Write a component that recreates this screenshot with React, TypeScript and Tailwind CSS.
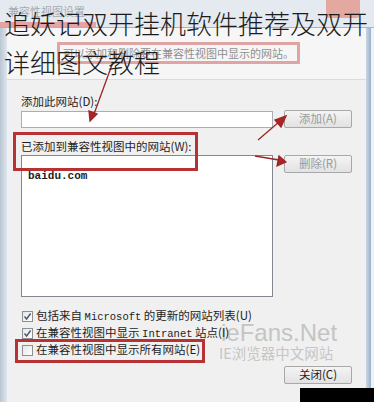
import React from "react";

const cjk = '"Noto Sans CJK SC", "Noto Sans", sans-serif';
const mono = '"Liberation Mono", "Noto Sans CJK SC", monospace';

function Btn({ label, muted = false }: { label: string; muted?: boolean }) {
  return (
    <div
      className={`flex h-[18px] w-[68px] items-center justify-center rounded-[2px] border border-[#a8a8a8] bg-gradient-to-b from-[#f4f4f4] to-[#e2e2e2] text-[11.5px] leading-none ${
        muted ? "text-[#9a9a9a]" : "text-[#1e1e1e]"
      }`}
    >
      {label}
    </div>
  );
}

function Check({ checked, children }: { checked: boolean; children: React.ReactNode }) {
  return (
    <div className="flex h-[16px] items-center gap-[3px] text-[11.5px] text-[#1e1e1e]">
      <div className="flex h-[11px] w-[11px] items-center justify-center border border-[#8e8f8f] bg-gradient-to-br from-[#e6e6e6] to-white">
        {checked && (
          <svg width="9" height="9" viewBox="0 0 9 9">
            <path d="M1.5 4.5 L3.6 7 L7.6 1.5" fill="none" stroke="#4a5a6a" strokeWidth="1.4" />
          </svg>
        )}
      </div>
      <span className="whitespace-nowrap">{children}</span>
    </div>
  );
}

export default function App() {
  return (
    <div className="relative h-[402px] w-[374px] overflow-hidden bg-[#f0f0f0]" style={{ fontFamily: cjk }}>
      {/* title bar */}
      <div className="flex h-[28px] items-start justify-between border-b border-[#a9b3be] bg-[#e4eaf0]">
        <span className="ml-[8px] mt-[3px] text-[11px] text-[#a4aab2]">兼容性视图设置</span>
        <div className="mr-[14px] h-[18px] w-[34px] rounded-b-[4px] bg-[#e3a8a0]" />
      </div>

      <div className="flex h-[374px]">
        <div className="w-[7px] bg-gradient-to-r from-[#b9c6d3] to-[#dfe6ee]" />
        <div className="flex flex-1 flex-col bg-[#f0f0f0]">
          {/* header */}
          <div className="h-[52px] border-b border-[#dcdcdc] bg-[#f6f6f6] pl-[50px] pt-[14px]">
            <div className="flex h-[22px] w-[243px] items-center border-[3px] border-[#dfa5a5] pl-[3px] text-[11px] text-[#8f8f8f]">
              可以添加和删除要在兼容性视图中显示的网站。
            </div>
          </div>

          <div className="pl-[14px] pr-[14px]">
            <div className="mt-[13px] h-[16px] text-[11.5px] leading-[16px] text-[#1e1e1e]">添加此网站(D):</div>
            <div className="mt-[1px] flex items-center justify-between">
              <div className="h-[17px] w-[252px] border border-[#abadb3] bg-white" />
              <Btn label="添加(A)" muted />
            </div>

            <div className="mt-[10px] h-[16px] text-[11.5px] leading-[16px] text-[#1e1e1e]">已添加到兼容性视图中的网站(W):</div>
            <div className="mt-[1px] flex items-start justify-between">
              <div className="h-[142px] w-[252px] border border-[#828790] bg-white pl-[6px] pt-[4px]">
                <span className="text-[11px] font-bold text-[#1e1e1e]" style={{ fontFamily: mono }}>
                  baidu.com
                </span>
              </div>
              <Btn label="删除(R)" muted />
            </div>

            <div className="relative mt-[11px] flex flex-col gap-[1px] pl-[1px]">
              <div
                className="pointer-events-none absolute left-[200px] top-[13px] text-[24px] leading-none text-[#c4c4c4]"
                style={{ fontFamily: '"Liberation Sans", sans-serif' }}
              >
                ieFans.Net
              </div>
              <div className="pointer-events-none absolute left-[198px] top-[38px] text-[14.5px] leading-none text-[#c6c6c6]">
                IE浏览器中文网站
              </div>
              <div className="relative">
                <Check checked>
                  包括来自 <span className="text-[10.5px]" style={{ fontFamily: mono }}>Microsoft</span> 的更新的网站列表(U)
                </Check>
              </div>
              <div className="relative">
                <Check checked>
                  在兼容性视图中显示 <span className="text-[10.5px]" style={{ fontFamily: mono }}>Intranet</span> 站点(I)
                </Check>
              </div>
              <div className="relative">
                <Check checked={false}>在兼容性视图中显示所有网站(E)</Check>
              </div>
            </div>

            <div className="mt-[8px] flex justify-end">
              <Btn label="关闭(C)" />
            </div>
          </div>
        </div>
        <div className="flex w-[8px]">
          <div className="w-[5px] bg-gradient-to-r from-[#c9d6e3] to-[#98b1cc]" />
          <div className="w-[3px] bg-[#eef2f6]" />
        </div>
      </div>

      {/* annotations */}
      <div className="pointer-events-none absolute left-[13px] top-[132px] h-[39px] w-[185px] border-[3px] border-[#b83234]" />
      <div className="pointer-events-none absolute left-[15px] top-[339px] h-[24px] w-[190px] border-[3px] border-[#b83234]" />
      <svg className="pointer-events-none absolute left-0 top-0" width="374" height="402">
        <g stroke="#9c2424" strokeWidth="1.3" fill="#a82626">
          <line x1="113" y1="62" x2="94" y2="114" />
          <polygon points="90,121 89,111 97,114" />
          <line x1="258" y1="140" x2="279" y2="122" />
          <polygon points="286,116 281,127 275,120" />
          <line x1="255" y1="156" x2="279" y2="160" />
          <polygon points="286,162 277,166 279,156" />
        </g>
      </svg>

      {/* overlaid title */}
      <div className="pointer-events-none absolute left-0 top-[22px] h-[5px] w-[96px] bg-[#e6a3a3]" />
      <div className="pointer-events-none absolute left-[4px] top-[3px] text-[26px] font-light leading-[39px] text-[#1c1c1c]">
        <div className="whitespace-nowrap">追妖记双开挂机软件推荐及双开</div>
        <div className="whitespace-nowrap">详细图文教程</div>
      </div>

      <div className="absolute bottom-0 right-0 h-[14px] w-[74px] bg-black" />
    </div>
  );
}
